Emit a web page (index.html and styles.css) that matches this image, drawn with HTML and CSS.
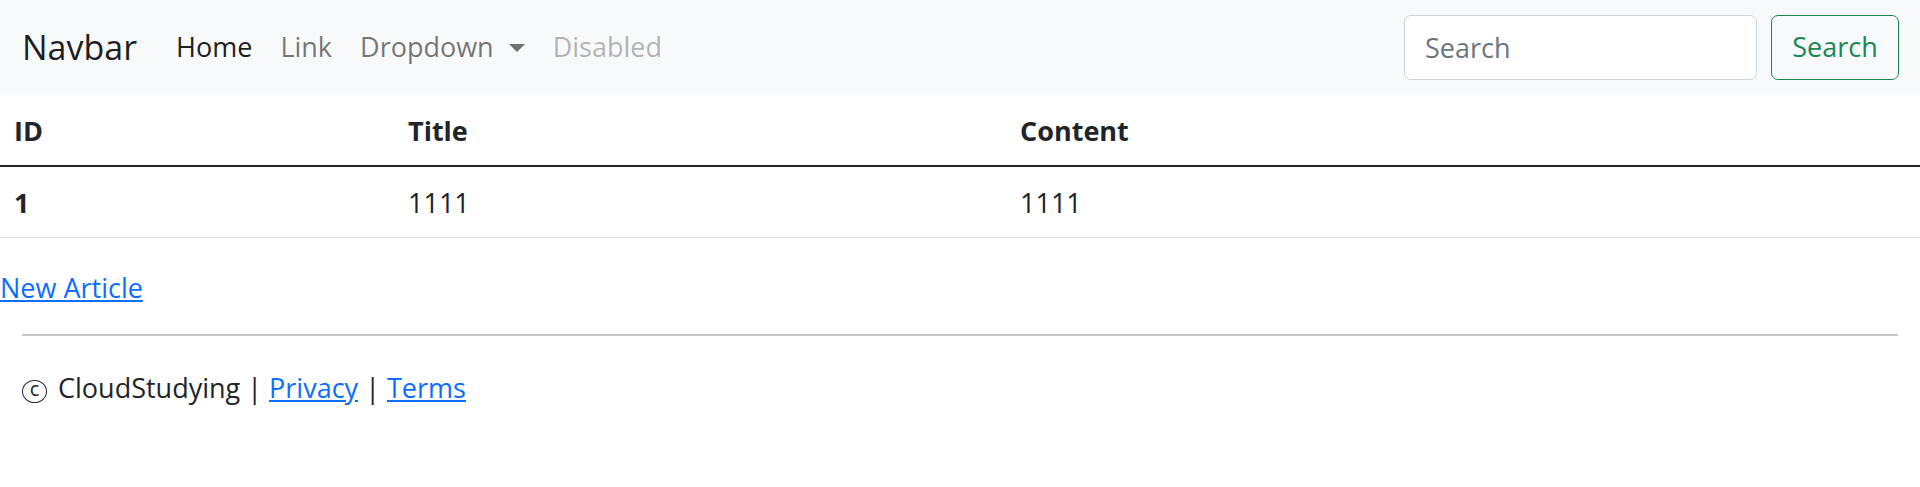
FILE: index.html
```html
<!DOCTYPE html>
<html lang="en">
<head>
  <meta charset="UTF-8">
  <meta name="viewport" content="width=device-width, initial-scale=1.0">
  <title>Articles</title>
  <link rel="stylesheet" href="styles.css">
</head>
<body>
  <!-- Top navigation -->
  <nav class="navbar">
    <a class="brand" href="#">Navbar</a>
    <ul class="nav-links">
      <li><a class="nav-link active" href="#">Home</a></li>
      <li><a class="nav-link" href="#">Link</a></li>
      <li><a class="nav-link dropdown" href="#">Dropdown</a></li>
      <li><a class="nav-link disabled" href="#">Disabled</a></li>
    </ul>
    <form class="search-form">
      <input type="search" class="search-input" placeholder="Search">
      <button type="submit" class="search-btn">Search</button>
    </form>
  </nav>

  <!-- Article list -->
  <table class="articles">
    <thead>
      <tr>
        <th class="col-id">ID</th>
        <th class="col-title">Title</th>
        <th>Content</th>
      </tr>
    </thead>
    <tbody>
      <tr>
        <th>1</th>
        <td>1111</td>
        <td>1111</td>
      </tr>
    </tbody>
  </table>

  <a class="new-link" href="#">New Article</a>

  <div class="container">
    <hr>
    <footer class="footer">
      <span class="copy">c</span> CloudStudying | <a href="#">Privacy</a> | <a href="#">Terms</a>
    </footer>
  </div>
</body>
</html>
```

FILE: styles.css
```css
body {
  margin: 0;
  font-family: "Open Sans", "Noto Sans", Arial, sans-serif;
  font-size: 27px;
  line-height: 1.5;
  color: #212529;
  background: #fff;
}
a {
  color: #0d6efd;
}

/* navbar */
.navbar {
  display: flex;
  align-items: center;
  height: 95px;
  padding: 0 21px 0 22px;
  background-color: #f8f9fa;
}
.brand {
  font-size: 34px;
  color: rgba(0, 0, 0, 0.9);
  text-decoration: none;
  margin-right: 25px;
}
.nav-links {
  display: flex;
  list-style: none;
  margin: 0;
  padding: 0;
  flex-grow: 1;
}
.nav-link {
  display: block;
  padding: 13px 14px;
  color: rgba(0, 0, 0, 0.55);
  text-decoration: none;
}
.nav-link.active {
  color: rgba(0, 0, 0, 0.9);
}
.nav-link.disabled {
  color: rgba(0, 0, 0, 0.3);
}
.dropdown::after {
  content: "";
  display: inline-block;
  margin-left: 15px;
  vertical-align: 5px;
  border-top: 8px solid;
  border-right: 8px solid transparent;
  border-left: 8px solid transparent;
}
.search-form {
  display: flex;
  gap: 14px;
}
.search-input, .search-btn {
  font-family: inherit;
  font-size: 27px;
  line-height: 1.5;
  padding: 10px 20px;
  border-radius: 7px;
  height: 65px;
  box-sizing: border-box;
}
.search-input {
  width: 353px;
  border: 1px solid #ced4da;
  background: #fff;
  color: #212529;
}
.search-input::placeholder {
  color: #6c757d;
}
.search-btn {
  width: 128px;
  border: 1px solid #198754;
  background: transparent;
  color: #198754;
  cursor: pointer;
}

/* table */
.articles {
  width: 100%;
  border-collapse: collapse;
  margin-bottom: 27px;
}
.articles th, .articles td {
  text-align: left;
  padding: 16px 14px 13.5px;
  border-bottom: 1px solid #dee2e6;
}
.articles thead th {
  border-bottom: 2px solid #212529;
}
.col-id {
  width: 366px;
}
.col-title {
  width: 584px;
}

.new-link {
  display: inline-block;
  margin-top: 3px;
}

/* footer */
.container {
  padding: 0 22px;
}
hr {
  margin: 25px 0 32px;
  border: 0;
  border-top: 2px solid #c6c6c6;
}
.copy {
  display: inline-block;
  box-sizing: border-box;
  width: 25px;
  height: 23px;
  border: 1.5px solid #212529;
  border-radius: 50%;
  font-size: 20px;
  line-height: 16px;
  text-align: center;
  vertical-align: 2px;
  margin-right: 4px;
}
```
